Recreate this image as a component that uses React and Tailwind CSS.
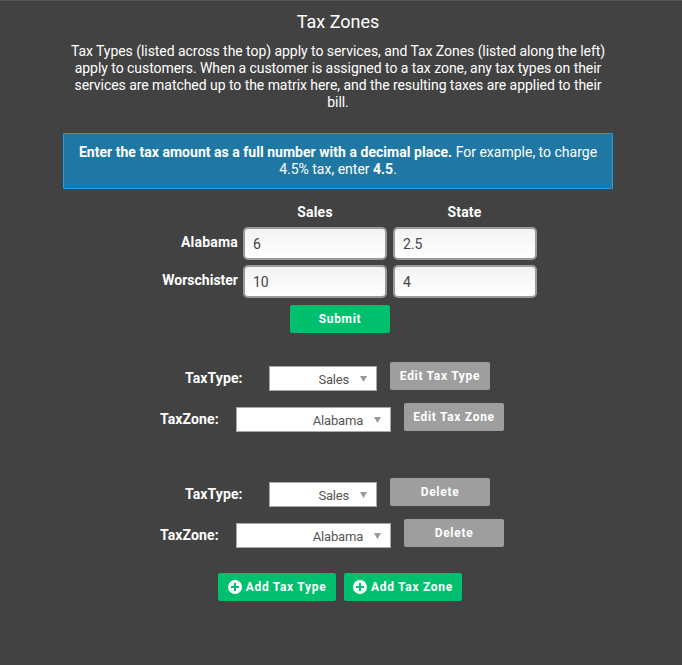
import React from 'react';

const btn = 'flex items-center justify-center rounded-[2px] text-white text-[12px] font-bold tracking-[0.7px]';

function Select({ width, value }) {
    return (
        <div className={`${width} h-[25px] bg-white border border-[#a9a9a9] flex items-center justify-end pr-[9px] text-[13px] tracking-[-0.2px] text-[#555]`}>
            <span className="pt-[2px]">{value}</span>
            <svg className="ml-[11px]" width="7" height="6" viewBox="0 0 7 6"><path d="M0 0h7L3.5 6z" fill="#999" /></svg>
        </div>
    );
}

function PickerRow({ label, labelW, selectW, value, action, extra }) {
    return (
        <div className={`flex items-start ${extra}`}>
            <span className={`${labelW} pt-[6px] text-[14px] font-bold tracking-[0.1px] text-white`}>{label}</span>
            <div className="pt-[4px]"><Select width={selectW} value={value} /></div>
            <button className={`${btn} ml-[13px] w-[100px] h-[28px] bg-[#9e9e9e] pb-[1px]`}>{action}</button>
        </div>
    );
}

function Plus() {
    return (
        <svg className="mr-[4px]" width="14" height="14" viewBox="0 0 14 14">
            <circle cx="7" cy="7" r="7" fill="#fff" />
            <path d="M6 3h2v3h3v2H8v3H6V8H3V6h3z" fill="#00bf6f" />
        </svg>
    );
}

function TaxInput({ value }) {
    return (
        <input
            readOnly
            value={value}
            className="w-[144px] h-[33px] rounded-[5px] border-2 border-[#9a9a9a] bg-gradient-to-b from-[#f3f3f3] to-white px-[8px] text-[14px] font-normal text-[#444] outline-none"
        />
    );
}

export default function App() {
    return (
        <div className="h-[665px] bg-[#424242] border-t border-[#555] text-white overflow-hidden font-['Roboto',sans-serif]">
            <div className="w-[550px] ml-[63px]">
                <h1 className="pt-[10px] text-center text-[18px] leading-[21px]">Tax Zones</h1>

                <p className="mt-[11px] text-center text-[14px] leading-[17px] tracking-[-0.05px]">
                    Tax Types (listed across the top) apply to services, and Tax Zones (listed along the left) apply to customers. When a customer is assigned to a tax zone, any tax types on their services are matched up to the matrix here, and the resulting taxes are applied to their bill.
                </p>

                <div className="h-[56px] mt-[22px] px-[12px] pt-[10px] bg-[#1f78a4] border border-[#16a0e8] rounded-[1px] text-center text-[14px] leading-[17px]">
                    <b className="tracking-[0.03px]">Enter the tax amount as a full number with a decimal place.</b> For example, to charge 4.5% tax, enter <b>4.5</b>.
                </div>

                {/* Matrix */}
                <div className="mt-[15px] grid grid-cols-[175px_144px_144px] gap-x-[5px] text-[14px] font-bold">
                    <span />
                    <span className="h-[23px] text-center leading-[17px] tracking-[0.2px]">Sales</span>
                    <span className="h-[23px] pl-[1px] text-center leading-[17px] tracking-[0.2px]">State</span>

                    <span className="h-[33px] mb-[5px] text-right leading-[30px] tracking-[0.2px]">Alabama</span>
                    <TaxInput value="6" />
                    <div className="pl-[1px]"><TaxInput value="2.5" /></div>

                    <span className="h-[33px] text-right leading-[30px]">Worschister</span>
                    <TaxInput value="10" />
                    <div className="pl-[1px]"><TaxInput value="4" /></div>
                </div>
            </div>

            <button className={`${btn} w-[100px] h-[28px] mt-[7px] ml-[290px] bg-[#00bf6f]`}>Submit</button>

            <PickerRow extra="mt-[29px] ml-[185px]" label="TaxType:" labelW="w-[84px]" selectW="w-[108px]" value="Sales" action="Edit Tax Type" />
            <PickerRow extra="mt-[12px] ml-[160px]" label="TaxZone:" labelW="w-[76px]" selectW="w-[155px]" value="Alabama" action="Edit Tax Zone" />

            <PickerRow extra="mt-[46px] ml-[185px]" label="TaxType:" labelW="w-[84px]" selectW="w-[108px]" value="Sales" action="Delete" />
            <PickerRow extra="mt-[12px] ml-[160px]" label="TaxZone:" labelW="w-[76px]" selectW="w-[155px]" value="Alabama" action="Delete" />

            <div className="flex gap-[8px] mt-[25px] ml-[218px]">
                <button className={`${btn} w-[118px] h-[28px] bg-[#00bf6f]`}><Plus />Add Tax Type</button>
                <button className={`${btn} w-[118px] h-[28px] bg-[#00bf6f]`}><Plus />Add Tax Zone</button>
            </div>
        </div>
    );
}
